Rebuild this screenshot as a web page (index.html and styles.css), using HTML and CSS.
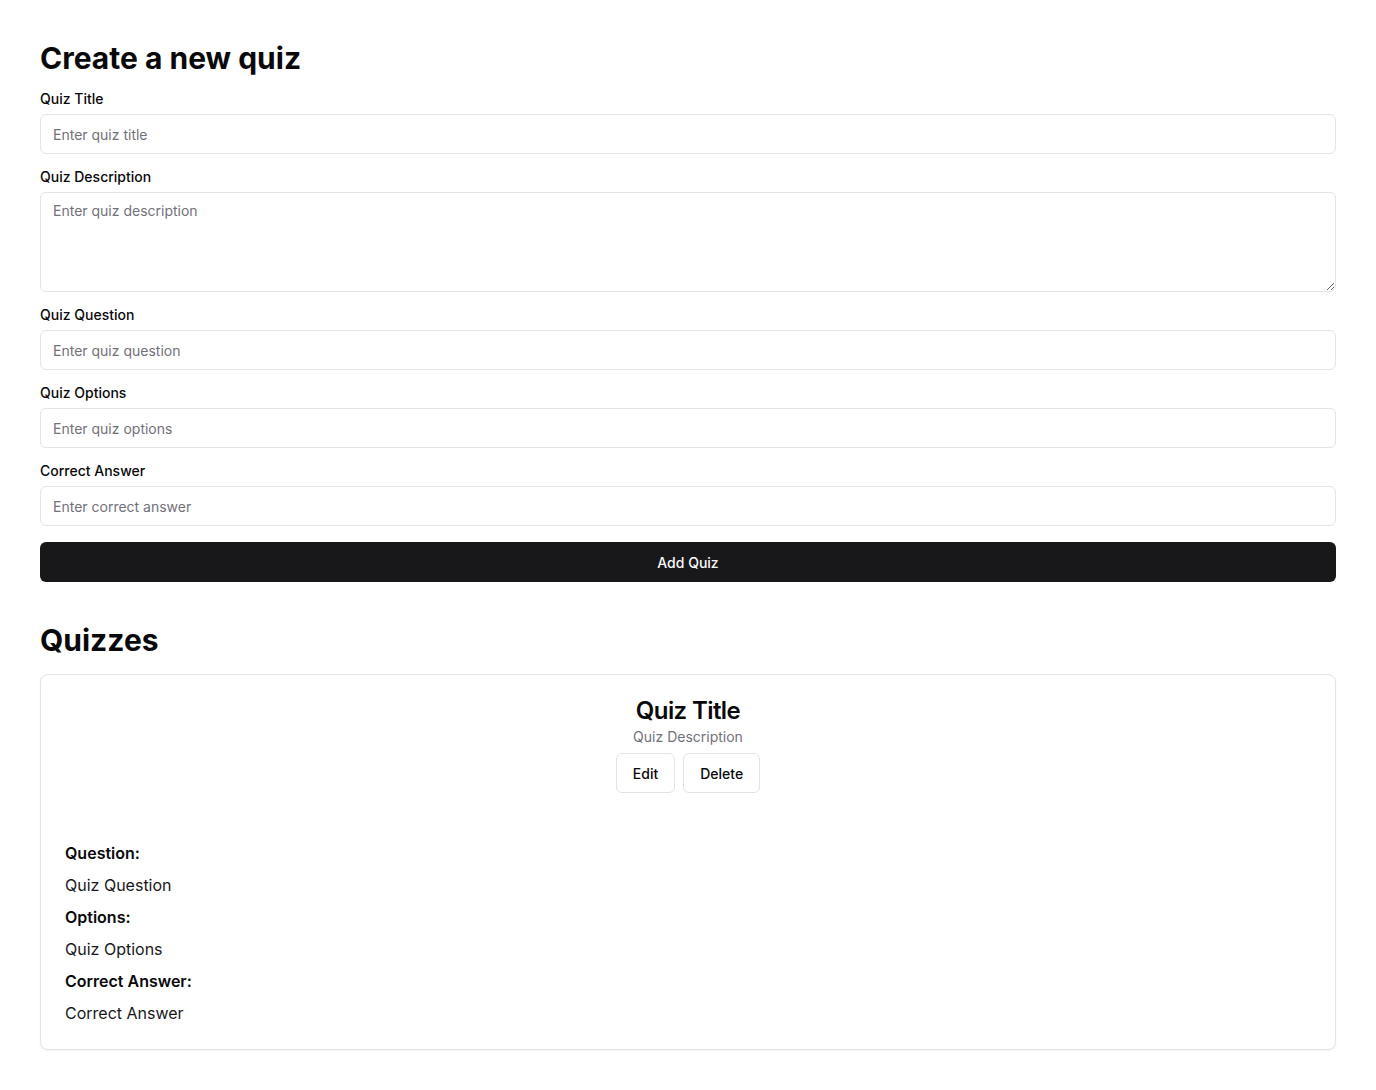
FILE: index.html
```html
<!DOCTYPE html>
<html lang="en">
<head>
<meta charset="utf-8">
<title>Create a new quiz</title>
<link rel="stylesheet" href="styles.css">
</head>
<body>
<main class="page">
  <h1 class="page-title">Create a new quiz</h1>
  <form class="quiz-form">
    <div class="field">
      <label class="label" for="title">Quiz Title</label>
      <input class="input" id="title" type="text" placeholder="Enter quiz title">
    </div>
    <div class="field">
      <label class="label" for="desc">Quiz Description</label>
      <textarea class="input textarea" id="desc" placeholder="Enter quiz description"></textarea>
    </div>
    <div class="field">
      <label class="label" for="question">Quiz Question</label>
      <input class="input" id="question" type="text" placeholder="Enter quiz question">
    </div>
    <div class="field">
      <label class="label" for="options">Quiz Options</label>
      <input class="input" id="options" type="text" placeholder="Enter quiz options">
    </div>
    <div class="field">
      <label class="label" for="answer">Correct Answer</label>
      <input class="input" id="answer" type="text" placeholder="Enter correct answer">
    </div>
    <button class="btn-primary" type="button">Add Quiz</button>
  </form>

  <h2 class="section-title">Quizzes</h2>
  <section class="card">
    <div class="card-header">
      <h3 class="card-title">Quiz Title</h3>
      <p class="card-desc">Quiz Description</p>
      <div class="card-actions">
        <button class="btn-outline" type="button">Edit</button>
        <button class="btn-outline" type="button">Delete</button>
      </div>
    </div>
    <div class="card-content">
      <p class="row strong">Question:</p>
      <p class="row">Quiz Question</p>
      <p class="row strong">Options:</p>
      <p class="row">Quiz Options</p>
      <p class="row strong">Correct Answer:</p>
      <p class="row">Correct Answer</p>
    </div>
  </section>
</main>
</body>
</html>
```

FILE: styles.css
```css
* { box-sizing: border-box; }
html, body { margin: 0; padding: 0; background: #ffffff; }
body {
  font-family: Inter, "Noto Sans", "Liberation Sans", sans-serif;
  color: #09090b;
}
.page {
  padding: 40px;
}
.page-title, .section-title {
  margin: 0;
  font-size: 30px;
  line-height: 36px;
  font-weight: 700;
}
.page-title { margin-bottom: 16px; }
.section-title { margin-top: 40px; margin-bottom: 16px; }
.quiz-form {
  display: flex;
  flex-direction: column;
  gap: 16px;
}
.field {
  display: flex;
  flex-direction: column;
  gap: 8px;
}
.label {
  font-size: 14px;
  line-height: 14px;
  font-weight: 500;
  color: #09090b;
}
.input {
  display: block;
  width: 100%;
  height: 40px;
  padding: 8px 12px;
  border: 1px solid #e4e4e7;
  border-radius: 6px;
  background: #fff;
  font-family: inherit;
  font-size: 14px;
  line-height: 20px;
  color: #09090b;
  outline: none;
}
.input::placeholder { color: #71717a; }
.textarea {
  height: 100px;
  resize: vertical;
}
.btn-primary {
  height: 40px;
  border: none;
  border-radius: 6px;
  background: #18181b;
  color: #fafafa;
  font-family: inherit;
  font-size: 14px;
  font-weight: 500;
  cursor: pointer;
}
.card {
  border: 1px solid #e4e4e7;
  border-radius: 8px;
  background: #fff;
  box-shadow: 0 1px 2px rgba(0,0,0,0.05);
}
.card-header {
  display: flex;
  flex-direction: column;
  align-items: center;
  padding: 24px 24px 0;
}
.card-title {
  margin: 0;
  font-size: 24px;
  line-height: 24px;
  font-weight: 600;
  letter-spacing: -0.6px;
}
.card-desc {
  margin: 4px 0 0;
  font-size: 14px;
  line-height: 20px;
  color: #71717a;
}
.card-actions {
  display: flex;
  gap: 8px;
  margin-top: 6px;
}
.btn-outline {
  height: 40px;
  padding: 0 16px;
  border: 1px solid #e4e4e7;
  border-radius: 6px;
  background: #fff;
  color: #09090b;
  font-family: inherit;
  font-size: 14px;
  font-weight: 500;
  cursor: pointer;
}
.card-content {
  display: flex;
  flex-direction: column;
  gap: 8px;
  padding: 48px 24px 24px;
}
.row {
  margin: 0;
  font-size: 16px;
  line-height: 24px;
  color: #18181b;
}
.row.strong {
  font-weight: 600;
  color: #09090b;
}
```
